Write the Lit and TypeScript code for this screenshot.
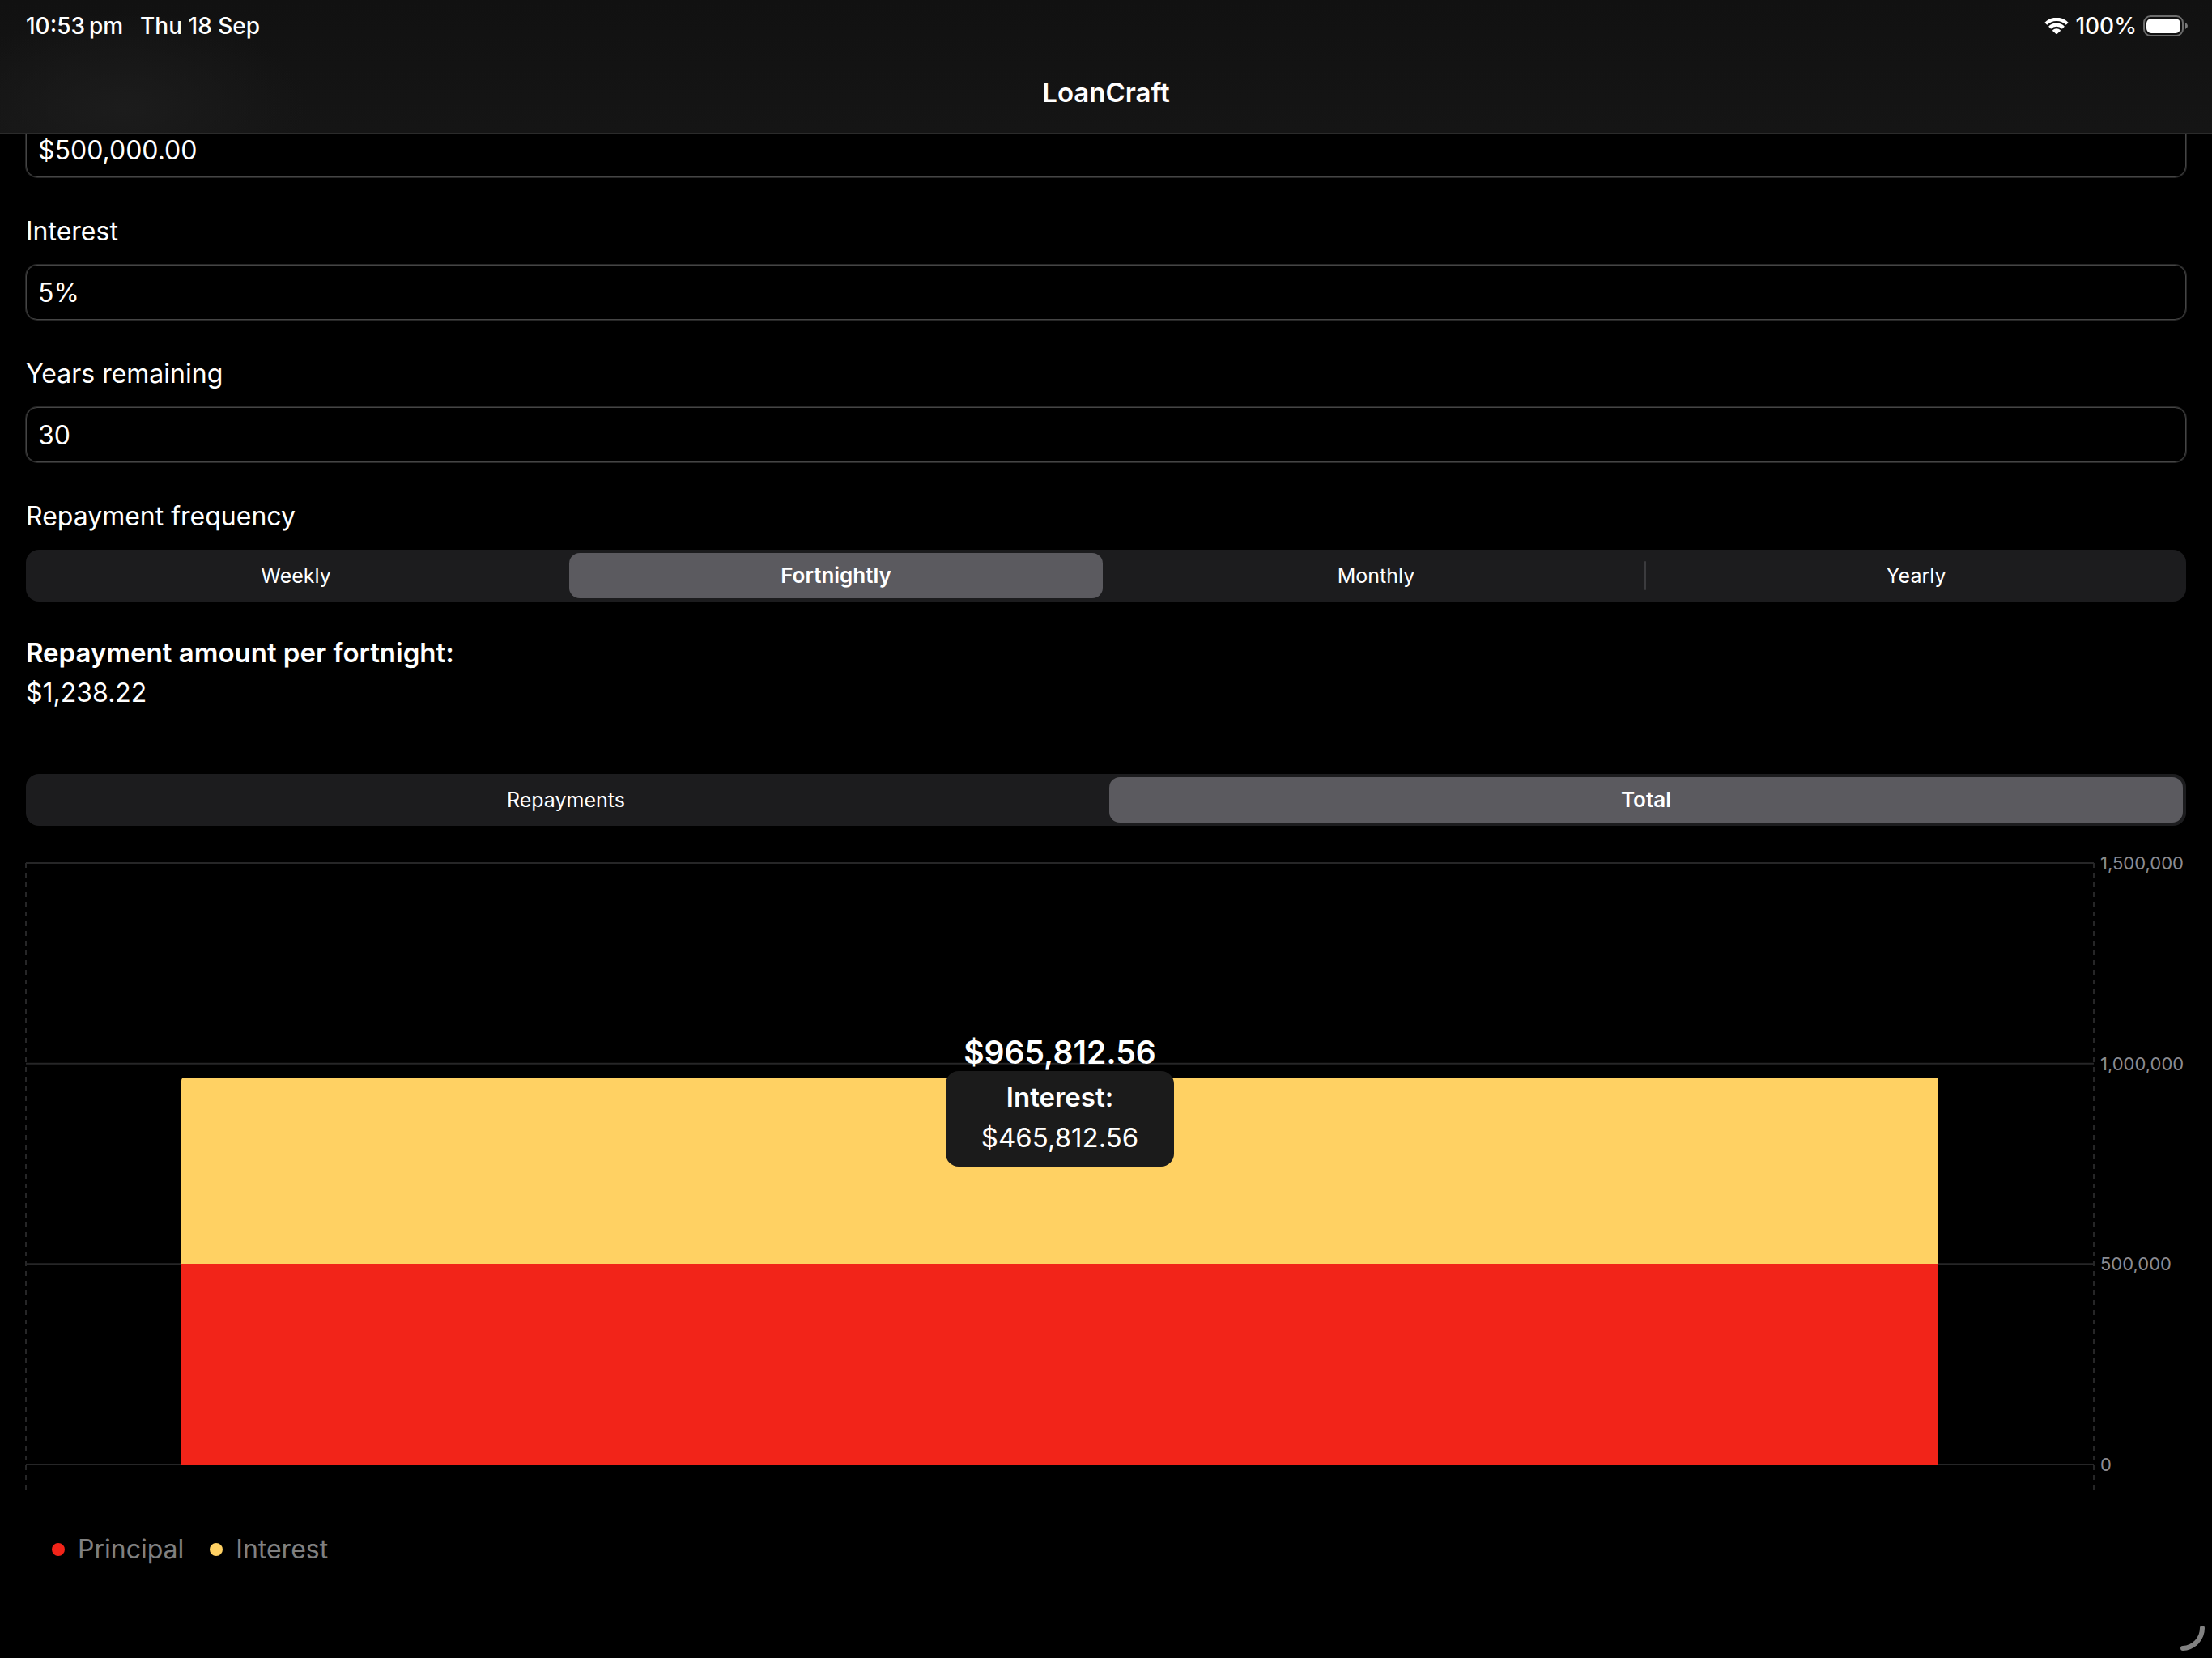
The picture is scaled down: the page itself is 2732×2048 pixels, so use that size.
import { LitElement, html, css, svg } from "lit";
import { customElement, property, state } from "lit/decorators.js";
import { classMap } from "lit/directives/class-map.js";

const money = (value: number) =>
  value.toLocaleString("en-US", { style: "currency", currency: "USD" });

/** A row of mutually exclusive options. */
@customElement("segmented-control")
class SegmentedControl extends LitElement {
  static styles = css`
    :host {
      display: block;
    }
    .track {
      display: grid;
      grid-auto-flow: column;
      grid-auto-columns: 1fr;
      gap: 8px;
      height: 64px;
      padding: 4px;
      box-sizing: border-box;
      border-radius: 16px;
      background: #1c1c1e;
    }
    .segment {
      position: relative;
      margin: 0;
      padding: 0;
      border: 0;
      border-radius: 13px;
      background: none;
      color: #fff;
      font: 400 25px/32px Inter, "Liberation Sans", sans-serif;
      cursor: pointer;
    }
    .selected {
      background: #5b5a5f;
      font-size: 26px;
      font-weight: 600;
    }
    .divided::before {
      content: "";
      position: absolute;
      left: -6px;
      top: 10px;
      bottom: 10px;
      width: 2px;
      border-radius: 1px;
      background: #3b3b3e;
    }
  `;

  @property({ attribute: false }) options: string[] = [];
  @property() value = "";
  @property() label = "";

  private pick(option: string) {
    this.dispatchEvent(new CustomEvent("pick", { detail: option }));
  }

  render() {
    const active = this.options.indexOf(this.value);
    return html`<div class="track" role="group" aria-label=${this.label}>
      ${this.options.map(
        (option, i) => html`<button
          type="button"
          class=${classMap({
            segment: true,
            selected: i === active,
            divided: i > 0 && i !== active && i - 1 !== active,
          })}
          aria-pressed=${i === active ? "true" : "false"}
          @click=${() => this.pick(option)}
        >${option}</button>`
      )}
    </div>`;
  }
}

/** Stacked bar of principal and interest on a value axis. */
@customElement("total-chart")
class TotalChart extends LitElement {
  static styles = css`
    :host {
      display: flex;
      flex-direction: column;
    }
    .chart {
      flex: 1;
      display: grid;
      grid-template-columns: 1fr 106px;
      gap: 8px;
      margin-bottom: 31px;
    }
    .plot {
      position: relative;
      display: flex;
      flex-direction: column;
      justify-content: flex-end;
      align-items: center;
    }
    .grid,
    .edges {
      position: absolute;
      left: 0;
      top: 0;
      width: 100%;
      height: 100%;
      overflow: visible;
    }
    .edges {
      height: calc(100% + 31px);
    }
    .rule {
      stroke: #262627;
      stroke-width: 2;
    }
    .dashed {
      stroke-dasharray: 6 6;
    }
    .bar {
      position: relative;
      width: 85%;
    }
    .interest {
      background: #ffd163;
    }
    .principal {
      background: #f22419;
    }
    .bar.interest {
      border-radius: 4px 4px 0 0;
    }
    .note {
      position: absolute;
      left: 0;
      right: 0;
      margin-top: -54px;
      display: flex;
      flex-direction: column;
      align-items: center;
    }
    .total {
      font-size: 39px;
      line-height: 46px;
      font-weight: 600;
    }
    .card {
      min-width: 282px;
      box-sizing: border-box;
      padding: 12px 24px 16px;
      display: flex;
      flex-direction: column;
      gap: 10px;
      border-radius: 16px;
      background: #1b1b1b;
      text-align: center;
      font-size: 33px;
      line-height: 40px;
    }
    .name {
      font-weight: 600;
    }
    .axis {
      margin: 0;
      padding: 0;
      list-style: none;
      display: flex;
      flex-direction: column;
      justify-content: space-between;
      color: #8c8c92;
      font-size: 22px;
      line-height: 28px;
    }
    .tick {
      height: 0;
      display: flex;
      align-items: center;
    }
    .legend {
      margin: 54px 0 0;
      padding: 0 32px;
      list-style: none;
      display: flex;
      gap: 32px;
      color: #808080;
      font-size: 32px;
      line-height: 40px;
    }
    .key {
      display: flex;
      align-items: center;
      gap: 16px;
    }
    .dot {
      width: 16px;
      height: 16px;
      border-radius: 50%;
    }
  `;

  @property({ type: Number }) principal = 0;
  @property({ type: Number }) interest = 0;

  render() {
    const top = 1500000;
    const ticks = [1500000, 1000000, 500000, 0];
    const share = (v: number) => `${(v / top) * 100}%`;
    const total = this.principal + this.interest;
    return html`
      <div class="chart">
        <div class="plot">
          <svg class="grid" aria-hidden="true">
            ${ticks.map(
              (t) => svg`<line class="rule" x1="0" x2="100%" y1=${share(top - t)} y2=${share(top - t)} />`
            )}
          </svg>
          <svg class="edges" aria-hidden="true">
            <line class="rule dashed" x1="0" x2="0" y1="0" y2="100%" />
            <line class="rule dashed" x1="100%" x2="100%" y1="0" y2="100%" />
          </svg>
          <div class="bar interest" style="height:${share(this.interest)}"></div>
          <div class="bar principal" style="height:${share(this.principal)}"></div>
          <div class="note" style="top:${share(top - total)}">
            <div class="total">${money(total)}</div>
            <div class="card">
              <span class="name">Interest:</span>
              <span>${money(this.interest)}</span>
            </div>
          </div>
        </div>
        <ul class="axis">
          ${ticks.map((t) => html`<li class="tick">${t.toLocaleString("en-US")}</li>`)}
        </ul>
      </div>
      <ul class="legend">
        <li class="key"><span class="dot principal"></span>Principal</li>
        <li class="key"><span class="dot interest"></span>Interest</li>
      </ul>
    `;
  }
}

@customElement("app-root")
class AppRoot extends LitElement {
  static styles = css`
    :host {
      position: relative;
      display: flex;
      flex-direction: column;
      min-height: 100vh;
      background: #000;
      color: #fff;
      font: 400 32px/42px Inter, "Liberation Sans", sans-serif;
    }
    .header {
      position: sticky;
      top: 0;
      z-index: 1;
      box-sizing: border-box;
      height: 165px;
      border-bottom: 1px solid #2b2b2b;
      background: radial-gradient(ellipse 230px 120px at 150px 135px, #1c1c1c, #1c1c1c00),
        linear-gradient(#111, #151515);
    }
    .status {
      display: flex;
      align-items: center;
      gap: 21px;
      padding: 12px 30px 0 32px;
      font-size: 28px;
      line-height: 40px;
      font-weight: 500;
    }
    .device {
      margin-left: auto;
      display: flex;
      align-items: center;
      gap: 8px;
    }
    .title {
      margin: 42px 0 0;
      text-align: center;
      font-size: 33px;
      line-height: 40px;
      font-weight: 600;
    }
    .main {
      flex: 1;
      display: flex;
      flex-direction: column;
      margin-top: -14px;
      padding: 0 32px 114px;
    }
    .field {
      display: flex;
      flex-direction: column;
      gap: 20px;
      margin-bottom: 46px;
    }
    .input {
      width: 100%;
      height: 68px;
      margin: 0;
      padding: 0 14px;
      box-sizing: border-box;
      border: 1px solid #454545;
      border-radius: 14px;
      box-shadow: 0 0 0 1px #262626;
      background: #000;
      color: inherit;
      font: inherit;
      outline: none;
    }
    .result {
      display: flex;
      flex-direction: column;
      gap: 8px;
      margin: -4px 0 79px;
    }
    .heading {
      margin: 0;
      font-size: 33px;
      line-height: 42px;
      font-weight: 600;
    }
    .amount {
      margin: 0;
    }
    .chart {
      flex: 1;
      min-height: 500px;
      margin-top: 46px;
    }
    .grip {
      position: absolute;
      right: 8px;
      bottom: 8px;
    }
  `;

  @state() private frequency = "Fortnightly";
  @state() private view = "Total";

  private readonly frequencies: Record<string, { perYear: number; unit: string }> = {
    Weekly: { perYear: 52, unit: "week" },
    Fortnightly: { perYear: 26, unit: "fortnight" },
    Monthly: { perYear: 12, unit: "month" },
    Yearly: { perYear: 1, unit: "year" },
  };

  render() {
    const { perYear, unit } = this.frequencies[this.frequency];
    const principal = 500000;
    const rate = 0.05 / perYear;
    const count = 30 * perYear;
    const payment = (principal * rate) / (1 - Math.pow(1 + rate, -count));
    const interest = payment * count - principal;

    return html`
      <header class="header">
        <div class="status">
          <span>10:53\u2009pm</span>
          <span>Thu 18 Sep</span>
          <span class="device">
            <svg width="30" height="20" viewBox="0 0 30 20" role="img" aria-label="Wi-Fi">
              <g fill="none" stroke="#fff" stroke-width="4.2">
                <path d="M1.8 7.4A18.4 18.4 0 0 1 28.2 7.4" />
                <path d="M6.6 12.2A11.7 11.7 0 0 1 23.4 12.2" />
              </g>
              <path
                d="M10.4 15A6.6 6.6 0 0 1 19.6 15Q20.1 15.700 19.6 16.2L15.8 19.7Q15 20.3 14.2 19.7L10.4 16.2Q9.900 15.700 10.4 15Z"
                fill="#fff"
              />
            </svg>
            <span>100%</span>
            <svg width="55" height="26" viewBox="0 0 55 26" role="img" aria-label="Battery full">
              <rect x="1" y="1" width="48" height="24" rx="8" fill="none" stroke="#6d6d6d" stroke-width="2" />
              <rect x="4" y="4" width="42" height="18" rx="6" fill="#fff" />
              <path d="M52 9Q55 10.400 55 13Q55 15.600 52 17Z" fill="#7a7a7a" />
            </svg>
          </span>
        </div>
        <h1 class="title">LoanCraft</h1>
      </header>
      <main class="main">
        <div class="field">
          <input class="input" aria-label="Principal" .value=${money(principal)} />
        </div>
        <div class="field">
          <label for="interest">Interest</label>
          <input class="input" id="interest" .value=${"5%"} />
        </div>
        <div class="field">
          <label for="years">Years remaining</label>
          <input class="input" id="years" .value=${"30"} />
        </div>
        <div class="field">
          <span>Repayment frequency</span>
          <segmented-control
            label="Repayment frequency"
            .options=${Object.keys(this.frequencies)}
            .value=${this.frequency}
            @pick=${(e: CustomEvent) => (this.frequency = e.detail)}
          ></segmented-control>
        </div>
        <section class="result">
          <h2 class="heading">Repayment amount per ${unit}:</h2>
          <p class="amount">${money(payment)}</p>
        </section>
        <segmented-control
          label="Chart"
          .options=${["Repayments", "Total"]}
          .value=${this.view}
          @pick=${(e: CustomEvent) => (this.view = e.detail)}
        ></segmented-control>
        <total-chart class="chart" .principal=${principal} .interest=${interest}></total-chart>
      </main>
      <svg class="grip" width="32" height="32" viewBox="0 0 32 32" aria-hidden="true">
        <path d="M28 3A25 25 0 0 1 4 28" fill="none" stroke="#828282" stroke-width="6" stroke-linecap="round" />
      </svg>
    `;
  }
}
